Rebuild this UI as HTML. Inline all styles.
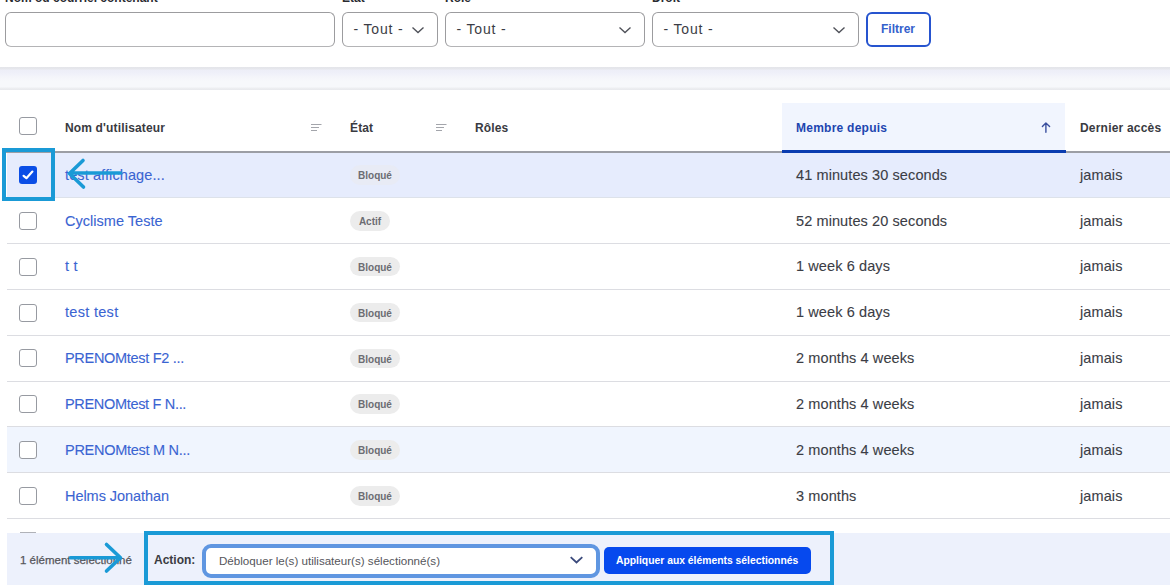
<!DOCTYPE html>
<html><head><meta charset="utf-8">
<style>
*{box-sizing:border-box;margin:0;padding:0}
html,body{width:1170px;height:585px;overflow:hidden;background:#fff;font-family:"Liberation Sans",sans-serif;color:#232429}
.a{position:absolute;white-space:nowrap;line-height:1}
.lbl{font-weight:bold;font-size:12px;color:#2a2b31}
.inp{position:absolute;top:12px;height:35px;border:1px solid #9c9c9f;border-bottom-color:#b4b4b6;border-radius:6px;background:#fff}
.sel{font-size:14px;letter-spacing:0.85px;color:#3b3d45}
.chev{position:absolute;width:14px;height:8px}
.band{position:absolute;left:0;top:67px;width:1170px;height:23px;background:linear-gradient(#e4e5ea 0px,#e6e7ec 2px,#edeef7 3px,#eff0f9 6px,#f4f5fa 10px,#f7f8fb 14px,#f7f8fb 20px,#eeeff2 21px,#e8e9ed 23px)}

.cb{position:absolute;left:19px;width:18px;height:18px;border:1px solid #979aa1;border-radius:3px;background:#fff}
.th{font-weight:bold;font-size:12px;letter-spacing:0.15px;color:#393a41}
.sort{position:absolute;width:10px;height:8px}
.row{position:absolute;left:7px;width:1163px;height:46px;border-bottom:1px solid #dcdde2}
.link{font-size:14.5px;color:#3a64d2;-webkit-text-stroke:0.1px #3a64d2}
.pill{position:absolute;height:19.5px;border-radius:10px;background:#ececec;font-weight:bold;font-size:10px;color:#6c6d73;line-height:21.5px;width:50px;text-align:center}
.txt{font-size:14.5px;letter-spacing:0.1px;color:#3b3d45;-webkit-text-stroke:0.1px #3b3d45}
</style></head><body>

<!-- labels -->
<div class="a lbl" style="left:5px;top:-8.5px">Nom ou courriel contenant</div>
<div class="a lbl" style="left:342px;top:-8.5px">État</div>
<div class="a lbl" style="left:445px;top:-8.5px">Rôle</div>
<div class="a lbl" style="left:652px;top:-8.5px">Droit</div>

<!-- inputs -->
<div class="inp" style="left:5px;width:330px"></div>
<div class="inp" style="left:342px;width:96px"></div>
<div class="inp" style="left:445px;width:200px"></div>
<div class="inp" style="left:652px;width:207px"></div>
<div class="a sel" style="left:353.5px;top:22.3px">- Tout -</div>
<div class="a sel" style="left:456.5px;top:22.3px">- Tout -</div>
<div class="a sel" style="left:663.5px;top:22.3px">- Tout -</div>
<svg class="chev" style="left:411px;top:25.5px" viewBox="0 0 14 8"><path d="M1.5 1.5 L7 6.5 L12.5 1.5" fill="none" stroke="#4f5159" stroke-width="1.35"/></svg>
<svg class="chev" style="left:618px;top:25.5px" viewBox="0 0 14 8"><path d="M1.5 1.5 L7 6.5 L12.5 1.5" fill="none" stroke="#4f5159" stroke-width="1.35"/></svg>
<svg class="chev" style="left:832px;top:25.5px" viewBox="0 0 14 8"><path d="M1.5 1.5 L7 6.5 L12.5 1.5" fill="none" stroke="#4f5159" stroke-width="1.35"/></svg>
<div style="position:absolute;left:866px;top:12px;width:65px;height:35px;border:2px solid #2654cf;border-radius:6px;background:#fff"></div>
<div class="a lbl" style="left:881px;top:23px;color:#3461cc">Filtrer</div>

<!-- band -->
<div class="band"></div>

<!-- header -->
<div class="cb" style="top:117px"></div>
<div style="position:absolute;left:782px;top:103px;width:283px;height:48px;background:#f1f5fe"></div>
<div class="a th" style="left:65px;top:121.5px">Nom d'utilisateur</div>
<svg class="sort" style="left:311px;top:124px;width:11px;height:8px" viewBox="0 0 11 8"><path d="M0 0.5h10.5M0 3.5h8M0 6.5h6" stroke="#a3a5ab" stroke-width="1.1"/></svg>
<div class="a th" style="left:350px;top:121.5px">État</div>
<svg class="sort" style="left:436px;top:124px;width:11px;height:8px" viewBox="0 0 11 8"><path d="M0 0.5h10.5M0 3.5h8M0 6.5h6" stroke="#a3a5ab" stroke-width="1.1"/></svg>
<div class="a th" style="left:475px;top:121.5px">Rôles</div>
<div class="a th" style="left:796px;top:121.5px;color:#1d45b0;letter-spacing:0.25px">Membre depuis</div>
<svg style="position:absolute;left:1041px;top:122px;width:11px;height:11px" viewBox="0 0 11 11"><path d="M4.9 10.3V1.2M1.4 4.6L4.9 1.1L8.6 4.6" fill="none" stroke="#3a4f9e" stroke-width="1.4" stroke-linecap="round" stroke-linejoin="round"/></svg>
<div class="a th" style="left:1080px;top:121.5px;letter-spacing:0.2px">Dernier accès</div>
<div style="position:absolute;left:5px;top:151px;width:1165px;height:2px;background:#9c9ea5"></div>
<div style="position:absolute;left:782px;top:150px;width:284px;height:3px;background:#0a3cb0"></div>

<!-- rows -->
<div class="row" style="top:153px;height:45.20px;background:#e6ecfd;border-bottom-color:#dde2ea"></div>
<div class="row" style="top:198.20px;height:45.83px"></div>
<div class="row" style="top:244.03px;height:45.83px"></div>
<div class="row" style="top:289.86px;height:45.83px"></div>
<div class="row" style="top:335.69px;height:45.83px"></div>
<div class="row" style="top:381.52px;height:45.83px"></div>
<div class="row" style="top:427.35px;height:45.83px;background:#f0f5fe"></div>
<div class="row" style="top:473.18px;height:45.83px"></div>
<div style="position:absolute;left:19px;top:166.17px;width:18px;height:18px;border-radius:3px;background:#0b4ee6"></div>
<svg style="position:absolute;left:19px;top:166.17px;width:18px;height:18px" viewBox="0 0 18 18"><path d="M4.6 9.8L7.4 12.2L13.4 5.6" fill="none" stroke="#fff" stroke-width="2.2" stroke-linecap="round" stroke-linejoin="round"/></svg>
<div class="cb" style="top:212.00px"></div>
<div class="cb" style="top:257.83px"></div>
<div class="cb" style="top:303.66px"></div>
<div class="cb" style="top:349.49px"></div>
<div class="cb" style="top:395.32px"></div>
<div class="cb" style="top:441.15px"></div>
<div class="cb" style="top:486.98px"></div>
<div class="a link" style="left:65px;top:167.70px;letter-spacing:0.1px">test affichage...</div>
<div class="a link" style="left:65px;top:213.53px;letter-spacing:0.03px">Cyclisme Teste</div>
<div class="a link" style="left:65px;top:259.36px;letter-spacing:0.2px">t t</div>
<div class="a link" style="left:65px;top:305.19px;letter-spacing:0.3px">test test</div>
<div class="a link" style="left:65px;top:351.02px;letter-spacing:-0.3px">PRENOMtest F2 ...</div>
<div class="a link" style="left:65px;top:396.85px;letter-spacing:-0.32px">PRENOMtest F N...</div>
<div class="a link" style="left:65px;top:442.68px;letter-spacing:-0.28px">PRENOMtest M N...</div>
<div class="a link" style="left:65px;top:488.51px;letter-spacing:-0.05px">Helms Jonathan</div>
<div class="pill" style="left:350px;top:165.27px;background:#e8ebf5">Bloqué</div>
<div class="pill" style="left:350px;top:211.10px;width:40px">Actif</div>
<div class="pill" style="left:350px;top:256.93px">Bloqué</div>
<div class="pill" style="left:350px;top:302.76px">Bloqué</div>
<div class="pill" style="left:350px;top:348.59px">Bloqué</div>
<div class="pill" style="left:350px;top:394.42px">Bloqué</div>
<div class="pill" style="left:350px;top:440.25px">Bloqué</div>
<div class="pill" style="left:350px;top:486.08px">Bloqué</div>
<div class="a txt" style="left:796px;top:167.70px">41 minutes 30 seconds</div>
<div class="a txt" style="left:796px;top:213.53px">52 minutes 20 seconds</div>
<div class="a txt" style="left:796px;top:259.36px">1 week 6 days</div>
<div class="a txt" style="left:796px;top:305.19px">1 week 6 days</div>
<div class="a txt" style="left:796px;top:351.02px">2 months 4 weeks</div>
<div class="a txt" style="left:796px;top:396.85px">2 months 4 weeks</div>
<div class="a txt" style="left:796px;top:442.68px">2 months 4 weeks</div>
<div class="a txt" style="left:796px;top:488.51px">3 months</div>
<div class="a txt" style="left:1080px;top:167.70px">jamais</div>
<div class="a txt" style="left:1080px;top:213.53px">jamais</div>
<div class="a txt" style="left:1080px;top:259.36px">jamais</div>
<div class="a txt" style="left:1080px;top:305.19px">jamais</div>
<div class="a txt" style="left:1080px;top:351.02px">jamais</div>
<div class="a txt" style="left:1080px;top:396.85px">jamais</div>
<div class="a txt" style="left:1080px;top:442.68px">jamais</div>
<div class="a txt" style="left:1080px;top:488.51px">jamais</div>

<!-- bottom bar -->
<div style="position:absolute;left:20px;top:532px;width:16px;height:1px;background:#b0b2b8"></div>
<div style="position:absolute;left:7px;top:532.5px;width:1163px;height:52.5px;background:#edf1fc"></div>
<div class="a" style="left:20px;top:555px;font-size:11.5px;color:#55565b;-webkit-text-stroke:0.25px #55565b">1 élément sélectionné</div>
<div class="a lbl" style="left:154px;top:554px;color:#3a3b41">Action:</div>
<div style="position:absolute;left:201.5px;top:543.5px;width:398.5px;height:34px;border:4.5px solid #5f96e1;border-radius:9px;background:#fff"></div>
<div class="a" style="left:219px;top:555px;font-size:11.6px;color:#55565b">Débloquer le(s) utilisateur(s) sélectionné(s)</div>
<svg style="position:absolute;left:569px;top:555.3px;width:15px;height:10px" viewBox="0 0 15 10"><path d="M1.7 2.2 L7.5 7.5 L13.3 2.2" fill="none" stroke="#3b4a7c" stroke-width="1.8"/></svg>
<div style="position:absolute;left:604px;top:547px;width:207px;height:27px;border-radius:5px;background:#0649ee"></div>
<div class="a" style="left:616px;top:556px;font-size:10.35px;font-weight:bold;color:#fff">Appliquer aux éléments sélectionnés</div>

<!-- annotations -->
<div style="position:absolute;left:2px;top:148px;width:53px;height:53px;border:4px solid #1a9ad6"></div>
<div style="position:absolute;left:144px;top:531px;width:690px;height:54px;border:4px solid #1a9ad6"></div>
<svg style="position:absolute;left:0;top:0;width:1170px;height:585px" viewBox="0 0 1170 585">
<path d="M120.5 173H70M83 160.5L69.5 173.5L83.5 187" fill="none" stroke="#1a9ad6" stroke-width="3.6" stroke-linecap="round" stroke-linejoin="round"/>
<path d="M70.5 557.8H120M106.5 544.5L120.5 557.8L106.5 571" fill="none" stroke="#1a9ad6" stroke-width="3.6" stroke-linecap="round" stroke-linejoin="round"/>
</svg>
</body></html>
